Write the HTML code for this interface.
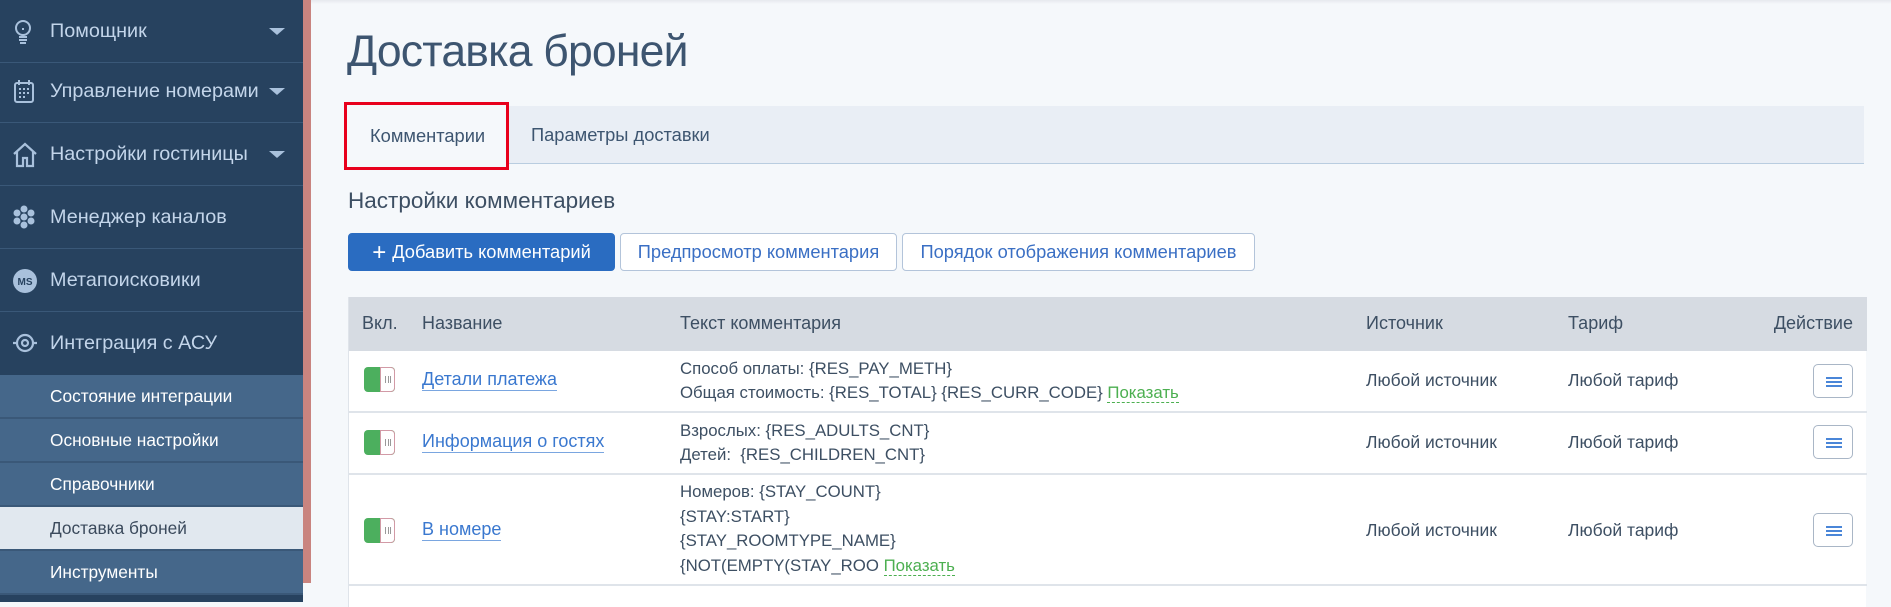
<!DOCTYPE html>
<html><head><meta charset="utf-8">
<style>
*{box-sizing:border-box;margin:0;padding:0}
body{width:1891px;height:602px;overflow:hidden;background:#f5f8fb;font-family:"Liberation Sans",sans-serif;position:relative;color:#3d4f63}
.sb{position:absolute;left:0;top:0;width:303px;height:602px;background:#27425f}
.pink{position:absolute;left:303px;top:0;width:8px;height:583px;background:#c9847f}
.it{position:absolute;left:0;width:303px;height:63px;border-bottom:1px solid #3a5878;color:#c3d5ea;font-size:19.8px;line-height:62px;padding-left:50px}
.it svg{position:absolute;left:12px;top:19px}
.arr{position:absolute;left:269px;top:28px;width:0;height:0;border-left:8px solid transparent;border-right:8px solid transparent;border-top:7px solid #a9c1dc}
.sub{position:absolute;left:0;width:303px;height:44px;background:#45678a;border-bottom:2px solid #3a5878;color:#fff;font-size:17.3px;line-height:43px;padding-left:50px}
.sub.act{background:#e1e8ef;color:#3b4a5c}
.title{position:absolute;left:347px;top:27px;font-size:44.5px;color:#3d5570;letter-spacing:-0.8px}
.tabs{position:absolute;left:348px;top:106px;width:1516px;height:58px;background:#e9eef5;border-bottom:1px solid #b9cde0}
.tab1{position:absolute;left:344px;top:102px;width:165px;height:68px;border:3px solid #e8001c;background:#f5f8fb;font-size:18.3px;line-height:62px;padding-left:23px;color:#3d5570}
.tab2{position:absolute;left:531px;top:106px;font-size:18.3px;line-height:58px;color:#3d5570}
.h2{position:absolute;left:348px;top:188px;font-size:22.5px;color:#3d4f63}
.btn{position:absolute;top:233px;height:38px;border:1px solid #b3c4da;border-radius:4px;background:#fff;color:#3a6fc4;font-size:18.3px;line-height:36px;text-align:center}
.btn.p{background:#2a6cc1;border-color:#2a6cc1;color:#fff}
.tbl{position:absolute;left:348px;top:297px;width:1518px;height:310px;background:#fff;border-left:1px solid #dfe4ea}
.hd{position:absolute;left:0;top:0;width:1518px;height:54px;background:#d6dbe2}
.hd .c{font-size:18px;top:16px}
.c{position:absolute;font-size:17.5px;color:#3d4f63;white-space:nowrap}
.row{position:absolute;left:0;width:1518px;border-bottom:2px solid #dfe4ea}
.tg{position:absolute;left:15px;width:31px;height:25px;border-radius:4px;background:#4caf5e;overflow:hidden}
.tg::after{content:"";position:absolute;right:0;top:0;width:15px;height:25px;background:#fff;border:1px solid #d29aa6;border-radius:0 4px 4px 0;box-sizing:border-box}
.tg i{position:absolute;right:4px;top:9px;width:6px;height:7px;border-left:1px solid #999;border-right:1px solid #999;z-index:2}
.tg i::after{content:"";position:absolute;left:2px;top:0;width:1px;height:7px;background:#999}
.lnk{color:#3a78cf;border-bottom:1px solid #7aa6e0;padding-bottom:1px;font-size:18px}
.sh{color:#4caf50;border-bottom:1px dashed #4caf50}
.ab{position:absolute;left:1464px;width:40px;height:34px;border:1px solid #a9b6c6;border-radius:5px;background:#fff}
.ab i{position:absolute;left:12px;width:16px;height:2px;background:#4a86d8}
.tx{line-height:24px;font-size:16.8px}
</style></head><body>
<div class="sb">
 <div class="it" style="top:0">
  <svg width="22" height="26" viewBox="0 0 22 26" fill="none" stroke="#a9c1dc" stroke-width="2"><circle cx="11" cy="9" r="7"/><path d="M11 9v2M7 18h8M7 21h8M8 24h6"/></svg>Помощник<span class="arr"></span></div>
 <div class="it" style="top:60px">
  <svg width="24" height="26" viewBox="0 0 24 26" fill="none" stroke="#a9c1dc" stroke-width="2"><rect x="3" y="4" width="18" height="19" rx="2"/><path d="M7 1v5M17 1v5" /><g fill="#a9c1dc" stroke="none"><rect x="7" y="9" width="2" height="2"/><rect x="11" y="9" width="2" height="2"/><rect x="15" y="9" width="2" height="2"/><rect x="7" y="13" width="2" height="2"/><rect x="11" y="13" width="2" height="2"/><rect x="15" y="13" width="2" height="2"/><rect x="7" y="17" width="2" height="2"/><rect x="11" y="17" width="2" height="2"/></g></svg>Управление номерами<span class="arr"></span></div>
 <div class="it" style="top:123px">
  <svg width="26" height="26" viewBox="0 0 26 26" fill="none" stroke="#a9c1dc" stroke-width="2.2"><path d="M2 12L13 2l11 10M5 10v14h6v-8h4v8h6V10"/></svg>Настройки гостиницы<span class="arr"></span></div>
 <div class="it" style="top:186px">
  <svg width="24" height="24" viewBox="0 0 24 24" fill="#a9c1dc"><circle cx="12" cy="12" r="3.5"/><circle cx="12" cy="4" r="3.5"/><circle cx="12" cy="20" r="3.5"/><circle cx="5" cy="8" r="3.5"/><circle cx="19" cy="8" r="3.5"/><circle cx="5" cy="16" r="3.5"/><circle cx="19" cy="16" r="3.5"/></svg>Менеджер каналов</div>
 <div class="it" style="top:249px">
  <svg width="26" height="26" viewBox="0 0 26 26"><circle cx="13" cy="13" r="12" fill="#a9c1dc"/><text x="13" y="17" font-size="10" font-weight="bold" text-anchor="middle" fill="#27425f" font-family="Liberation Sans">MS</text></svg>Метапоисковики</div>
 <div class="it" style="top:312px;border-bottom:none">
  <svg width="26" height="24" viewBox="0 0 26 24" fill="none" stroke="#a9c1dc" stroke-width="2.2"><path d="M1 12h4M21 12h4"/><circle cx="13" cy="12" r="8"/><circle cx="13" cy="12" r="3"/></svg>Интеграция с АСУ</div>
 <div class="sub" style="top:375px">Состояние интеграции</div>
 <div class="sub" style="top:419px">Основные настройки</div>
 <div class="sub" style="top:463px">Справочники</div>
 <div class="sub act" style="top:507px">Доставка броней</div>
 <div class="sub" style="top:551px">Инструменты</div>
</div>
<div class="pink"></div>
<div style="position:absolute;left:311px;top:0;width:1580px;height:4px;background:linear-gradient(#e6e9ee,#f5f8fb)"></div>
<div class="title">Доставка броней</div>
<div class="tabs"></div>
<div class="tab1">Комментарии</div>
<div class="tab2">Параметры доставки</div>
<div class="h2">Настройки комментариев</div>
<div class="btn p" style="left:348px;width:267px"><span style="font-size:24px;vertical-align:-2px;margin-right:6px">+</span>Добавить комментарий</div>
<div class="btn" style="left:620px;width:277px">Предпросмотр комментария</div>
<div class="btn" style="left:902px;width:353px">Порядок отображения комментариев</div>
<div class="tbl">
 <div class="hd">
  <div class="c" style="left:13px">Вкл.</div>
  <div class="c" style="left:73px">Название</div>
  <div class="c" style="left:331px">Текст комментария</div>
  <div class="c" style="left:1017px">Источник</div>
  <div class="c" style="left:1219px">Тариф</div>
  <div class="c" style="right:14px">Действие</div>
 </div>
 <div class="row" style="top:54px;height:62px">
  <div class="tg" style="top:16px"><i></i></div>
  <div class="c" style="left:73px;top:18px"><span class="lnk">Детали платежа</span></div>
  <div class="c tx" style="left:331px;top:6px">Способ оплаты: {RES_PAY_METH}<br>Общая стоимость: {RES_TOTAL} {RES_CURR_CODE} <span class="sh">Показать</span></div>
  <div class="c" style="left:1017px;top:19px">Любой источник</div>
  <div class="c" style="left:1219px;top:19px">Любой тариф</div>
  <div class="ab" style="top:13px"><i style="top:12px"></i><i style="top:16px"></i><i style="top:20px"></i></div>
 </div>
 <div class="row" style="top:116px;height:62px">
  <div class="tg" style="top:17px"><i></i></div>
  <div class="c" style="left:73px;top:18px"><span class="lnk">Информация о гостях</span></div>
  <div class="c tx" style="left:331px;top:6px">Взрослых: {RES_ADULTS_CNT}<br>Детей:&nbsp; {RES_CHILDREN_CNT}</div>
  <div class="c" style="left:1017px;top:19px">Любой источник</div>
  <div class="c" style="left:1219px;top:19px">Любой тариф</div>
  <div class="ab" style="top:12px"><i style="top:12px"></i><i style="top:16px"></i><i style="top:20px"></i></div>
 </div>
 <div class="row" style="top:178px;height:111px">
  <div class="tg" style="top:43px"><i></i></div>
  <div class="c" style="left:73px;top:44px"><span class="lnk">В номере</span></div>
  <div class="c tx" style="left:331px;top:5px;line-height:24.5px">Номеров: {STAY_COUNT}<br>{STAY:START}<br>{STAY_ROOMTYPE_NAME}<br>{NOT(EMPTY(STAY_ROO <span class="sh">Показать</span></div>
  <div class="c" style="left:1017px;top:45px">Любой источник</div>
  <div class="c" style="left:1219px;top:45px">Любой тариф</div>
  <div class="ab" style="top:38px"><i style="top:12px"></i><i style="top:16px"></i><i style="top:20px"></i></div>
 </div>
</div>
</body></html>
